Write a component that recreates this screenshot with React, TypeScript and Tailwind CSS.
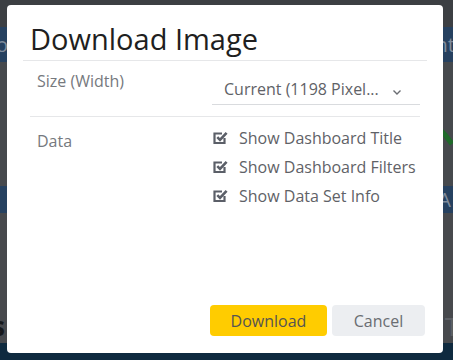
import React from 'react'

const font = { fontFamily: '"Open Sans", "Noto Sans", sans-serif' }

function CheckIcon() {
  return (
    <svg width="15" height="15" viewBox="0 0 15 15" className="shrink-0">
      <path d="M11.5 8V13H1.5V3.5H9" fill="none" stroke="#5b5f68" strokeWidth="2.2" />
      <path d="M4.3 7.2L7 9.9L13.6 2.8" fill="none" stroke="#5b5f68" strokeWidth="2.6" />
    </svg>
  )
}

function Option({ label }: { label: string }) {
  return (
    <div className="flex h-[29px] items-center gap-[11px]">
      <CheckIcon />
      <span className="text-[16px] text-[#5f6267]">{label}</span>
    </div>
  )
}

export default function App() {
  return (
    <div className="relative h-[360px] w-[453px] overflow-hidden bg-[#46494d]" style={font}>
      {/* page behind the overlay */}
      <div className="flex h-full flex-col">
        <div className="h-[27px] bg-[#3c3f43]" />
        <div className="flex h-[35px] items-center justify-between bg-[#264160] text-[20px] text-[#7f8c9c]">
          <span className="-ml-[4px]">o</span>
          <span className="-mr-[2px]">nt</span>
        </div>
        <div className="h-[124px] bg-[#46494d]" />
        <div className="flex h-[27px] items-center justify-end bg-[#264160] pr-[2px] text-[20px] text-[#7f8c9c]">
          A
        </div>
        <div className="flex h-[130px] items-end justify-between bg-[#47494d] pb-[2px] text-[26px] leading-[30px] font-bold text-[#16181b]">
          <span className="-ml-[8px]">s</span>
          <span className="-mr-[6px] font-normal text-[#5d6065]">T</span>
        </div>
        <div className="flex-1 bg-[#0f2a3f]" />
      </div>
      <svg className="absolute left-[420px] top-[110px]" width="33" height="40" viewBox="0 0 33 40">
        <path d="M2 6 Q20 16 32 34" fill="none" stroke="#1f6a2a" strokeWidth="5" />
      </svg>

      {/* dialog */}
      <div className="absolute left-[7px] top-[5px] flex h-[348px] w-[436px] flex-col rounded-[4px] bg-white">
        <div className="mx-[16px] border-b border-[#e6e7e9] pb-[2px] pl-[7px] pt-[15px]">
          <h1 className="text-[29px] leading-[38px] text-[#1f1f21]">Download Image</h1>
        </div>

        <div className="mx-[23px] flex h-[56px] border-b border-[#e6e7e9]">
          <div className="w-[182px] pl-[7px] pt-[8px] text-[16px] text-[#76797e]">Size (Width)</div>
          <div className="flex-1 pt-[12px]">
            <div className="flex h-[32px] items-center border-b border-[#d9dbde] pl-[12px] pr-[18px] text-[16px] text-[#5f6267]">
              <span className="flex-1">Current (1198 Pixel...</span>
              <svg width="10" height="8" viewBox="0 0 10 8" className="mt-[6px]">
                <path d="M1.5 2.5L5 6L8.5 2.5" fill="none" stroke="#6a6d72" strokeWidth="1.4" />
              </svg>
            </div>
          </div>
        </div>

        <div className="mx-[23px] flex pt-[6px]">
          <div className="w-[182px] pl-[7px] pt-[6px] text-[16px] text-[#76797e]">Data</div>
          <div className="flex flex-col pl-[1px]">
            <Option label="Show Dashboard Title" />
            <Option label="Show Dashboard Filters" />
            <Option label="Show Data Set Info" />
          </div>
        </div>

        <div className="mt-auto flex justify-end gap-[5px] pb-[17px] pr-[18px]">
          <button className="h-[31px] w-[117px] rounded-[4px] bg-[#ffcc00] text-[16px] text-[#555453]">
            Download
          </button>
          <button className="h-[31px] w-[93px] rounded-[4px] bg-[#eceef1] text-[16px] text-[#6a6d72]">
            Cancel
          </button>
        </div>
      </div>
    </div>
  )
}
